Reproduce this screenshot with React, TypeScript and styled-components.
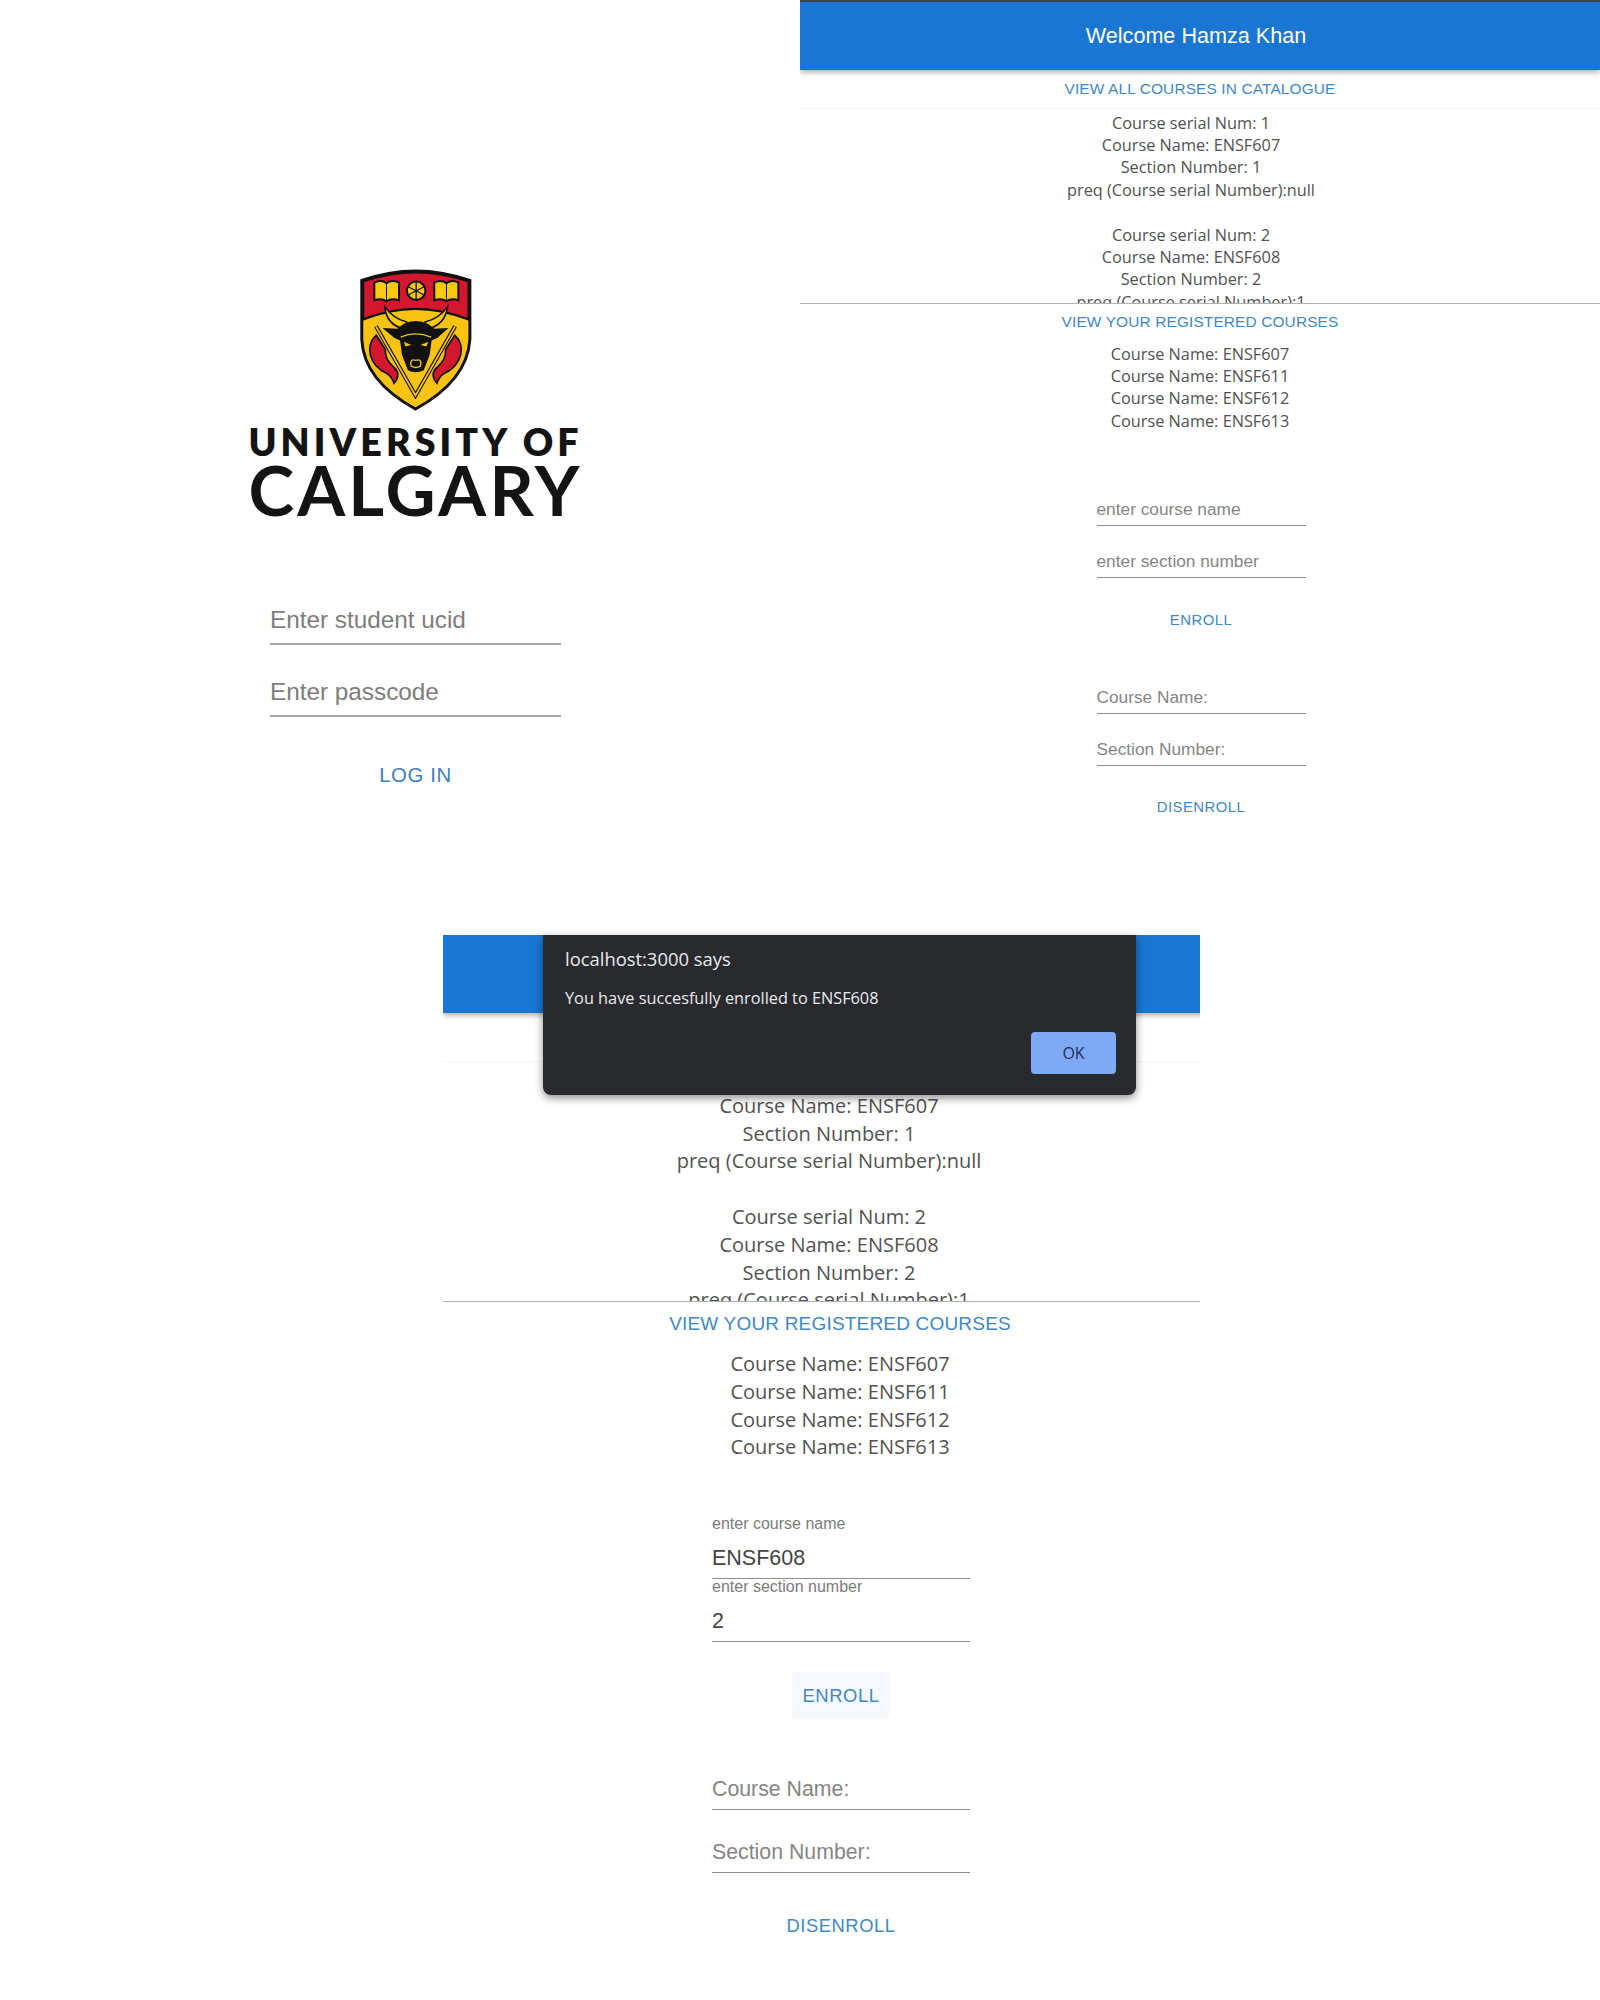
import React from "react";
import styled, { createGlobalStyle, ThemeProvider } from "styled-components";

const GlobalStyle = createGlobalStyle`
  html, body { margin: 0; padding: 0; background: #fff; }
  body { font-family: "Liberation Sans", Arial, sans-serif; }
`;

const large = {
  width: 800, inner: 800, topLine: 2, headerH: 68, headerFont: 21.6, headerShift: 8,
  catH: 38, listH: 196, listPad: 3.5, lh: 22.4, font: 16.3, shift: 18, regH: 36, regGap: 2.5,
  formGap: 61.5, btnFont: 14.9, viewFont: 15.4, controlW: 209, fieldH: 32, fieldGap: 20, fieldFont: 17.3,
  firstFieldH: 32, firstFieldGap: 20, btnH: 36, btnW: 80, btnTop: 24, btnBottom: 44, labelFont: 12, valueFont: 17, padB: 7,
};
const compact = {
  width: 757, inner: 794, topLine: 0, headerH: 78, headerFont: 25, headerShift: 8,
  catH: 48, listH: 241, listPad: 3, lh: 27.8, font: 20, shift: 22, regH: 44, regGap: 4,
  formGap: 55, btnFont: 18.4, viewFont: 19, controlW: 258, fieldH: 40, fieldGap: 23, fieldFont: 21.3,
  firstFieldH: 63, firstFieldGap: 0, btnH: 47, btnW: 98, btnTop: 30, btnBottom: 51, labelFont: 16, valueFont: 21.5, padB: 8,
};

const Page = styled.main`
  width: 1600px;
  height: 2000px;
  overflow: hidden;
`;
const TopRow = styled.div`
  display: grid;
  grid-template-columns: 800px 800px;
  height: 935px;
`;
const LoginPane = styled.section`
  display: flex;
  flex-direction: column;
  align-items: center;
  padding: 267px 0 0 31px;
`;
const LogoMark = styled.svg`
  display: block;
  width: 113px;
  height: 145px;
`;
const WordmarkTop = styled.div`
  margin-top: 11px;
  font: 800 37.5px/38px Lato, sans-serif;
  letter-spacing: 4.1px;
  color: #141414;
  white-space: nowrap;
`;
const WordmarkBottom = styled.div`
  margin-top: -2px;
  font: 700 69px/62px Lato, sans-serif;
  letter-spacing: 3.2px;
  color: #141414;
  white-space: nowrap;
`;
const LoginForm = styled.form`
  display: flex;
  flex-direction: column;
  width: 291px;
  margin-top: 83px;
  gap: 31px;
`;
const LoginInput = styled.input`
  box-sizing: border-box;
  width: 100%;
  height: 41px;
  padding: 0 0 8px;
  border: 0;
  border-bottom: 2px solid #a5a5a5;
  outline: 0;
  background: transparent;
  font: 24.3px "Liberation Sans", sans-serif;
  &::placeholder { color: #7d7d7d; opacity: 1; }
`;
const LoginButton = styled.button`
  align-self: center;
  margin-top: 9px;
  height: 36px;
  padding: 0 8px;
  border: 0;
  background: transparent;
  color: #3f80bd;
  font: 20.4px "Liberation Sans", sans-serif;
  letter-spacing: 0.6px;
`;

const PanelFrame = styled.section`
  width: ${({ theme }) => theme.width}px;
  overflow: hidden;
`;
const PanelInner = styled.div`
  width: ${({ theme }) => theme.inner}px;
`;
const Header = styled.header`
  box-sizing: content-box;
  display: flex;
  align-items: center;
  justify-content: center;
  height: ${({ theme }) => theme.headerH}px;
  padding-right: ${({ theme }) => theme.headerShift}px;
  border-top: ${({ theme }) => theme.topLine}px solid #3b4650;
  background: #1976d2;
  box-shadow: 0 2px 6px rgba(0, 0, 0, 0.35);
  color: #fff;
  font: ${({ theme }) => theme.headerFont}px "Liberation Sans", sans-serif;
`;
const TextButton = styled.button<{ $h: number }>`
  display: block;
  height: ${(p) => p.$h}px;
  margin: 0 auto;
  padding: 0 8px;
  border: 0;
  background: transparent;
  color: #3f88c5;
  font: ${({ theme }) => theme.viewFont}px "Liberation Sans", sans-serif;
  letter-spacing: 0.01em;
  white-space: nowrap;
`;
const CatalogueList = styled.div`
  box-sizing: border-box;
  height: ${({ theme }) => theme.listH}px;
  overflow: hidden;
  padding: ${({ theme }) => theme.listPad}px ${({ theme }) => theme.shift}px 0 0;
  box-shadow: inset 0 1px 0 #f6f6f6;
  border-bottom: 1px solid #b0b0b0;
  text-align: center;
`;
const CourseLine = styled.div`
  min-height: ${({ theme }) => theme.lh}px;
  color: #525252;
  font: ${({ theme }) => theme.font}px/${({ theme }) => theme.lh}px "Open Sans", sans-serif;
`;
const RegisteredList = styled.div`
  margin-top: ${({ theme }) => theme.regGap}px;
  margin-bottom: ${({ theme }) => theme.formGap}px;
  text-align: center;
`;
const FormColumn = styled.form`
  display: flex;
  flex-direction: column;
  align-items: center;
  padding-left: 2px;
`;
const Control = styled.label<{ $first?: boolean }>`
  box-sizing: border-box;
  display: flex;
  flex-direction: column;
  justify-content: flex-end;
  width: ${({ theme }) => theme.controlW}px;
  height: ${(p) => (p.$first ? p.theme.firstFieldH : p.theme.fieldH)}px;
  margin-bottom: ${(p) => (p.$first ? p.theme.firstFieldGap : p.theme.fieldGap)}px;
  border-bottom: 1px solid #8c8c8c;
  &:last-of-type { margin-bottom: 0; }
`;
const FloatLabel = styled.span`
  color: #7b7b7b;
  font: ${({ theme }) => theme.labelFont}px/18px "Liberation Sans", sans-serif;
  margin-bottom: 13px;
`;
const ControlInput = styled.input<{ $filled?: boolean }>`
  width: 100%;
  height: ${({ theme }) => theme.fieldH - 8}px;
  padding: 0 0 ${(p) => (p.$filled ? 8 : p.theme.padB)}px;
  box-sizing: border-box;
  border: 0;
  outline: 0;
  background: transparent;
  color: #444;
  font: ${(p) => (p.$filled ? p.theme.valueFont : p.theme.fieldFont)}px "Liberation Sans", sans-serif;
  &::placeholder { color: #858585; opacity: 1; }
`;
const ActionButton = styled.button<{ $last?: boolean }>`
  flex: none;
  width: ${({ theme }) => theme.btnW * 1.4}px;
  height: ${({ theme }) => theme.btnH}px;
  margin: ${(p) => (p.$last ? p.theme.btnTop - 1 : p.theme.btnTop)}px 0 ${(p) => (p.$last ? 0 : p.theme.btnBottom)}px;
  border: 0;
  border-radius: 4px;
  background: transparent;
  color: #3f88c5;
  font: ${({ theme }) => theme.btnFont}px "Liberation Sans", sans-serif;
  letter-spacing: 0.03em;
`;
const ActiveButton = styled(ActionButton)`
  width: ${({ theme }) => theme.btnW}px;
  background: #f5f9fd;
`;

const BottomArea = styled.div`
  position: relative;
  width: 757px;
  margin-left: 443px;
`;
const AlertBox = styled.div`
  position: absolute;
  top: 0;
  left: 100px;
  box-sizing: border-box;
  display: flex;
  flex-direction: column;
  width: 593px;
  height: 160px;
  padding: 12px 20px 21px 22px;
  border-radius: 0 0 8px 8px;
  background: #292a2d;
  box-shadow: 0 3px 8px rgba(0, 0, 0, 0.45);
  color: #e8eaed;
`;
const AlertTitle = styled.div`
  font: 18.4px/24px "Open Sans", sans-serif;
`;
const AlertMessage = styled.div`
  margin-top: 15px;
  font: 16.3px/24px "Open Sans", sans-serif;
`;
const AlertOk = styled.button`
  align-self: flex-end;
  width: 85px;
  height: 42px;
  margin-top: auto;
  border: 0;
  border-radius: 4px;
  background: #7ea9f5;
  color: #1c2f55;
  font: 16px "Open Sans", sans-serif;
`;

const ShieldLogo = () => (
  <LogoMark viewBox="55 25 340 440" aria-hidden="true">
    <path d="M62 66 Q225 8 390 66 L390 245 Q382 370 225 456 Q68 370 62 245 Z" fill="#fbc311" stroke="#111" strokeWidth="9" />
    <path d="M66 69 Q225 14 386 69 L386 184 Q300 152 225 152 Q150 152 66 184 Z" fill="#d2172e" stroke="#111" strokeWidth="7" />
    <g fill="#fbc90f" stroke="#111" strokeWidth="6">
      <path d="M100 72 Q122 62 137 74 Q152 62 175 72 L175 126 Q152 118 137 129 Q122 118 100 126 Z" />
      <path d="M282 72 Q304 62 319 74 Q334 62 355 72 L355 126 Q334 118 319 129 Q304 118 282 126 Z" />
      <circle cx="227" cy="97" r="28" />
    </g>
    <g fill="none" stroke="#111" strokeWidth="3">
      <path d="M137 74 V128 M319 74 V128" />
      <path d="M227 72 V122 M203 85 L251 110 M251 85 L203 110" strokeWidth="4" />
    </g>
    <g fill="#fbc90f" stroke="#111" strokeWidth="5">
      <path d="M132 146 Q136 200 192 214 L198 192 Q158 182 132 146 Z" />
      <path d="M322 146 Q316 200 260 214 L254 192 Q296 182 322 146 Z" />
    </g>
    <path d="M105 205 L225 415 L345 205" fill="none" stroke="#111" strokeWidth="12" />
    <path d="M105 205 L225 415 L345 205" fill="none" stroke="#fbc90f" strokeWidth="5" />
    <path d="M188 198 Q225 180 264 198 L282 212 L325 210 L292 240 L274 248 L268 292 L250 338 Q226 350 202 338 L184 292 L178 248 L160 240 L125 210 L170 212 Z" fill="#111" />
    <path d="M180 238 Q225 218 272 238" fill="none" stroke="#e9c12b" strokeWidth="4" />
    <path d="M190 252 L212 262 L194 266 Z M264 252 L240 262 L258 266 Z" fill="#e9c12b" />
    <path d="M212 326 Q206 302 226 308 Q246 302 240 326 Q226 334 212 326 Z" fill="none" stroke="#e9c12b" strokeWidth="4" />
    <g fill="#d2172e" stroke="#111" strokeWidth="5">
      <path d="M106 232 Q80 255 88 292 Q98 330 138 348 Q152 356 160 378 Q182 352 162 332 Q130 305 134 276 Z" />
      <path d="M344 232 Q370 255 362 292 Q352 330 312 348 Q298 356 290 378 Q268 352 288 332 Q320 305 316 276 Z" />
    </g>
  </LogoMark>
);

const Panel = ({ filled }: { filled?: boolean }) => (
  <PanelFrame>
    <PanelInner>
      <Header>Welcome Hamza Khan</Header>
      <TextButton type="button" $h={filled ? compact.catH : large.catH}>VIEW ALL COURSES IN CATALOGUE</TextButton>
      <CatalogueList>
        <CourseLine>Course serial Num: 1</CourseLine>
        <CourseLine>Course Name: ENSF607</CourseLine>
        <CourseLine>Section Number: 1</CourseLine>
        <CourseLine>preq (Course serial Number):null</CourseLine>
        <CourseLine />
        <CourseLine>Course serial Num: 2</CourseLine>
        <CourseLine>Course Name: ENSF608</CourseLine>
        <CourseLine>Section Number: 2</CourseLine>
        <CourseLine>preq (Course serial Number):1</CourseLine>
      </CatalogueList>
      <TextButton type="button" $h={filled ? compact.regH : large.regH}>VIEW YOUR REGISTERED COURSES</TextButton>
      <RegisteredList>
        <CourseLine>Course Name: ENSF607</CourseLine>
        <CourseLine>Course Name: ENSF611</CourseLine>
        <CourseLine>Course Name: ENSF612</CourseLine>
        <CourseLine>Course Name: ENSF613</CourseLine>
      </RegisteredList>
      <FormColumn>
        {filled ? (
          <>
            <Control $first>
              <FloatLabel>enter course name</FloatLabel>
              <ControlInput $filled defaultValue="ENSF608" />
            </Control>
            <Control $first>
              <FloatLabel>enter section number</FloatLabel>
              <ControlInput $filled defaultValue="2" />
            </Control>
            <ActiveButton type="button">ENROLL</ActiveButton>
          </>
        ) : (
          <>
            <Control $first><ControlInput placeholder="enter course name" /></Control>
            <Control $first><ControlInput placeholder="enter section number" /></Control>
            <ActionButton type="button">ENROLL</ActionButton>
          </>
        )}
      </FormColumn>
      <FormColumn>
        <Control><ControlInput placeholder="Course Name:" /></Control>
        <Control><ControlInput placeholder="Section Number:" /></Control>
        <ActionButton type="button" $last>DISENROLL</ActionButton>
      </FormColumn>
    </PanelInner>
  </PanelFrame>
);

export default function App() {
  return (
    <Page>
      <GlobalStyle />
      <TopRow>
        <LoginPane>
          <ShieldLogo />
          <WordmarkTop>UNIVERSITY OF</WordmarkTop>
          <WordmarkBottom>CALGARY</WordmarkBottom>
          <LoginForm>
            <LoginInput placeholder="Enter student ucid" />
            <LoginInput placeholder="Enter passcode" />
            <LoginButton type="button">LOG IN</LoginButton>
          </LoginForm>
        </LoginPane>
        <ThemeProvider theme={large}>
          <Panel />
        </ThemeProvider>
      </TopRow>
      <BottomArea>
        <ThemeProvider theme={compact}>
          <Panel filled />
        </ThemeProvider>
        <AlertBox>
          <AlertTitle>localhost:3000 says</AlertTitle>
          <AlertMessage>You have succesfully enrolled to ENSF608</AlertMessage>
          <AlertOk type="button">OK</AlertOk>
        </AlertBox>
      </BottomArea>
    </Page>
  );
}
